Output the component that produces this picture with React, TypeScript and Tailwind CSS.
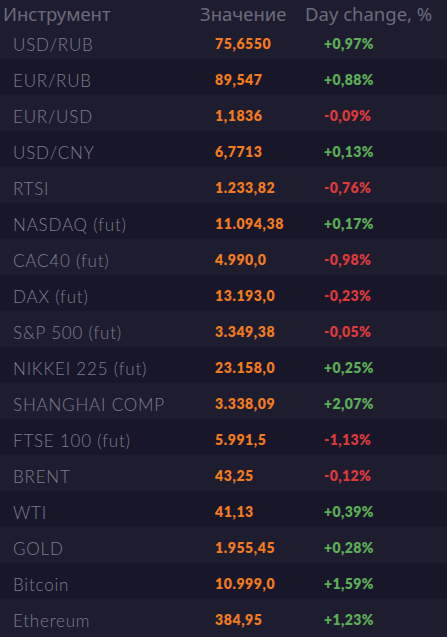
const rows: [string, string, string][] = [
  ["USD/RUB", "75,6550", "+0,97%"],
  ["EUR/RUB", "89,547", "+0,88%"],
  ["EUR/USD", "1,1836", "-0,09%"],
  ["USD/CNY", "6,7713", "+0,13%"],
  ["RTSI", "1.233,82", "-0,76%"],
  ["NASDAQ (fut)", "11.094,38", "+0,17%"],
  ["CAC40 (fut)", "4.990,0", "-0,98%"],
  ["DAX (fut)", "13.193,0", "-0,23%"],
  ["S&P 500 (fut)", "3.349,38", "-0,05%"],
  ["NIKKEI 225 (fut)", "23.158,0", "+0,25%"],
  ["SHANGHAI COMP", "3.338,09", "+2,07%"],
  ["FTSE 100 (fut)", "5.991,5", "-1,13%"],
  ["BRENT", "43,25", "-0,12%"],
  ["WTI", "41,13", "+0,39%"],
  ["GOLD", "1.955,45", "+0,28%"],
  ["Bitcoin", "10.999,0", "+1,59%"],
  ["Ethereum", "384,95", "+1,23%"],
];

export default function App() {
  return (
    <div className="w-[447px] h-[637px] bg-[#1e1d30] overflow-hidden">
      <div className="grid grid-cols-[200px_105px_1fr] h-[23px] items-center text-[18.5px] text-[#6b6b78] font-['Noto_Sans',sans-serif]">
        <div className="pl-[3px]">Инструмент</div>
        <div>Значение</div>
        <div>Day change, %</div>
      </div>
      {rows.map(([name, value, change], i) => (
        <div
          key={name}
          className={
            "grid grid-cols-[200px_105px_1fr] h-[36px] items-center pt-[4px] " +
            (i % 2 === 1 ? "bg-[#18172a]" : "bg-[#1e1d30]")
          }
        >
          <div className="pl-[13px] pt-[3px] text-[17px] font-light text-[#7f7e8c] font-['Lato',sans-serif] tracking-[0.8px]">
            {name}
          </div>
          <div className="pl-[15px] text-[14px] font-extrabold text-[#f27a1f] font-['Lato',sans-serif] tracking-[0.6px]">
            {value}
          </div>
          <div
            className={
              "pl-[19px] text-[14px] font-extrabold font-['Lato',sans-serif] tracking-[0.4px] " +
              (change.startsWith("+") ? "text-[#5cae57]" : "text-[#dc3a3a]")
            }
          >
            {change}
          </div>
        </div>
      ))}
    </div>
  );
}
